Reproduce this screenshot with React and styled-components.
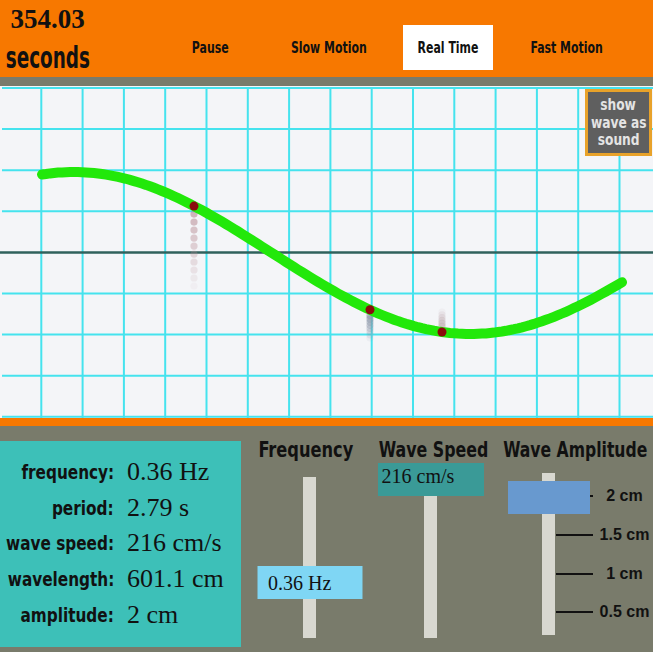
import React from 'react'
import styled, { createGlobalStyle } from 'styled-components'

const narrow = `"DejaVu Sans Condensed", "Liberation Sans", sans-serif`
const serif = `"Liberation Serif", "Times New Roman", serif`

const GlobalStyle = createGlobalStyle`
  html, body {
    margin: 0;
    padding: 0;
    background: #797b6b;
  }
  body {
    width: 653px;
    height: 652px;
    overflow: hidden;
    font-family: ${narrow};
    color: #111;
  }
`

// the original face is a tall, tight condensed gothic; squeeze DejaVu Condensed to match
const Squeeze = styled.span`
  display: inline-block;
  white-space: nowrap;
  transform: scaleX(${p => p.$x || 0.8});
  transform-origin: ${p => p.$origin || 'center'} center;
`

const Header = styled.header`
  display: flex;
  height: 77px;
  background: #f77800;
`

const Clock = styled.div`
  width: 95px;
  display: flex;
  flex-direction: column;
  align-items: center;
  padding-top: 1px;
`

const Time = styled.div`
  font-family: ${serif};
  font-weight: bold;
  font-size: 27px;
  line-height: 37px;
`

const Unit = styled.div`
  font-family: ${narrow};
  font-weight: bold;
  font-size: 31px;
  line-height: 38px;
`

const Nav = styled.nav`
  display: flex;
  align-items: center;
  align-self: flex-end;
  gap: 29px;
  margin: 0 0 7px 70px;
`

const NavButton = styled.button`
  display: flex;
  align-items: center;
  justify-content: center;
  width: 90px;
  height: 45px;
  padding: 0;
  border: none;
  background: ${p => (p.$active ? '#fff' : 'transparent')};
  font-family: ${narrow};
  font-weight: bold;
  font-size: 16px;
  color: #111;
  cursor: pointer;
`

const Divider = styled.div`
  height: 9px;
  background: #797b6b;
`

const Canvas = styled.div`
  position: relative;
  height: 332px;
  background: #f4f5f8;
  svg {
    display: block;
  }
`

const SoundButton = styled.button`
  position: absolute;
  top: 3px;
  right: 1px;
  width: 67px;
  height: 67px;
  box-sizing: border-box;
  border: 3px solid #e8a22a;
  background: #5f5f5f;
  color: #e4e4e4;
  font-family: ${narrow};
  font-weight: bold;
  font-size: 16px;
  line-height: 17.5px;
  padding: 0;
  display: flex;
  flex-direction: column;
  align-items: center;
  justify-content: center;
`

const OrangeBar = styled.div`
  height: 8px;
  background: #f77800;
`

const Controls = styled.section`
  display: flex;
  height: 226px;
`

const InfoPanel = styled.div`
  margin-top: 15px;
  width: 241px;
  height: 206px;
  box-sizing: border-box;
  padding-top: 13px;
  background: #3dc0b8;
  display: grid;
  grid-template-columns: 114px auto;
  grid-auto-rows: 35.7px;
  column-gap: 13px;
  align-items: center;
`

const InfoLabel = styled.div`
  display: flex;
  justify-content: flex-end;
  white-space: nowrap;
  font-family: ${narrow};
  font-weight: bold;
  font-size: 20px;
`

const InfoValue = styled.div`
  font-family: ${serif};
  font-size: 26px;
  white-space: nowrap;
`

const SliderColumn = styled.div`
  width: ${p => p.$width}px;
  display: flex;
  flex-direction: column;
`

const SliderTitle = styled.h2`
  margin: 12px 0 0;
  display: flex;
  justify-content: center;
  font-family: ${narrow};
  font-weight: bold;
  font-size: 22px;
  line-height: 24px;
`

const SliderBody = styled.div`
  display: flex;
  align-items: flex-start;
  padding-left: ${p => p.$inset}px;
  margin-top: ${p => p.$offset}px;
`

const Track = styled.div`
  position: relative;
  width: 13px;
  height: ${p => p.$height}px;
  background: #d8d8d0;
`

const Thumb = styled.div`
  position: absolute;
  z-index: 2;
  left: 50%;
  transform: translateX(-50%);
  width: ${p => p.$width}px;
  height: 33px;
  box-sizing: border-box;
  background: ${p => p.$color};
  font-family: ${serif};
  font-size: 20px;
  line-height: 22px;
  color: #111;
  padding: ${p => (p.$top ? '2px 0 0 4px' : '6px 0 0 11px')};
  white-space: nowrap;
`

const Scale = styled.div`
  display: flex;
  flex-direction: column;
  margin-top: 4px;
  margin-left: 1px;
`

const ScaleRow = styled.div`
  display: flex;
  align-items: center;
  height: 38.7px;
`

const Tick = styled.div`
  width: 37px;
  height: 2px;
  background: #111;
`

const TickLabel = styled.div`
  width: 57px;
  margin-left: 3px;
  text-align: center;
  white-space: nowrap;
  font-family: "Liberation Sans", Arial, sans-serif;
  font-weight: bold;
  font-size: 16px;
`

const info = [
  ['frequency:', '0.36 Hz'],
  ['period:', '2.79 s'],
  ['wave speed:', '216 cm/s'],
  ['wavelength:', '601.1 cm'],
  ['amplitude:', '2 cm'],
]

const speeds = ['Pause', 'Slow Motion', 'Real Time', 'Fast Motion']

const W = 653
const H = 332
const CX = 272
const LAMBDA = 793
const AMP = 81
const MID = 167

const waveY = x => MID + AMP * Math.sin((2 * Math.PI * (x - CX)) / LAMBDA)

function wavePath() {
  const pts = []
  for (let x = 42; x <= 622; x += 4) pts.push(`${x},${waveY(x).toFixed(1)}`)
  return 'M' + pts.join(' L')
}

function Trail({ x, from, to, n, color }) {
  const out = []
  for (let i = 0; i < n; i++) {
    const y = from + ((to - from) * i) / (n - 1)
    out.push(<circle key={i} cx={x} cy={y} r="3.6" fill={color} opacity={0.6 * (1 - i / n)} />)
  }
  return <g>{out}</g>
}

function WaveGrid() {
  const hLines = []
  for (let k = 0; k <= 8; k++) {
    const y = 2 + 41.1 * k
    if (k === 4) continue
    hLines.push(<line key={'h' + k} x1="2" x2={W} y1={y} y2={y} stroke="#45e3ee" strokeWidth="2" />)
  }
  const vLines = []
  for (let k = 1; k <= 15; k++) {
    const x = 41.3 * k
    vLines.push(<line key={'v' + k} x1={x} x2={x} y1="1" y2={H} stroke="#45e3ee" strokeWidth="2" />)
  }
  const dots = [194, 370, 442]
  return (
    <svg width={W} height={H} viewBox={`0 0 ${W} ${H}`}>
      {vLines}
      {hLines}
      <line x1="0" x2={W} y1="166.5" y2="166.5" stroke="#2f615c" strokeWidth="2.5" />
      <Trail x={194} from={waveY(194) + 8} to={200} n={10} color="#b78a92" />
      <Trail x={370} from={waveY(370) + 6} to={252} n={8} color="#8a96a8" />
      <Trail x={442} from={waveY(442) - 6} to={226} n={6} color="#c6b4b8" />
      <path d={wavePath()} fill="none" stroke="#22e80a" strokeWidth="10" strokeLinecap="round" />
      {dots.map(x => (
        <circle key={x} cx={x} cy={waveY(x)} r="4.5" fill="#8a0c0c" />
      ))}
    </svg>
  )
}

export default function App() {
  return (
    <>
      <GlobalStyle />
      <Header>
        <Clock>
          <Time>354.03</Time>
          <Unit><Squeeze $x={0.66}>seconds</Squeeze></Unit>
        </Clock>
        <Nav>
          {speeds.map(s => (
            <NavButton key={s} $active={s === 'Real Time'}>
              <Squeeze $x={0.76}>{s}</Squeeze>
            </NavButton>
          ))}
        </Nav>
      </Header>
      <Divider />
      <Canvas>
        <WaveGrid />
        <SoundButton>
          <Squeeze $x={0.85}>show</Squeeze>
          <Squeeze $x={0.85}>wave as</Squeeze>
          <Squeeze $x={0.85}>sound</Squeeze>
        </SoundButton>
      </Canvas>
      <OrangeBar />
      <Controls>
        <InfoPanel>
          {info.map(([label, value]) => (
            <React.Fragment key={label}>
              <InfoLabel><Squeeze $x={0.85} $origin="right">{label}</Squeeze></InfoLabel>
              <InfoValue>{value}</InfoValue>
            </React.Fragment>
          ))}
        </InfoPanel>

        <SliderColumn $width={129}>
          <SliderTitle><Squeeze $x={0.82}>Frequency</Squeeze></SliderTitle>
          <SliderBody $inset={62} $offset={15}>
            <Track $height={161}>
              <Thumb $width={105} $color="#7fd6f4" style={{ top: 89 }}>0.36 Hz</Thumb>
            </Track>
          </SliderBody>
        </SliderColumn>

        <SliderColumn $width={127}>
          <SliderTitle><Squeeze $x={0.8}>Wave Speed</Squeeze></SliderTitle>
          <SliderBody $inset={54} $offset={4}>
            <Track $height={172}>
              <Thumb $width={106} $color="#3a9a97" $top style={{ top: -3 }}>216 cm/s</Thumb>
            </Track>
          </SliderBody>
        </SliderColumn>

        <SliderColumn $width={156}>
          <SliderTitle><Squeeze $x={0.79}>Wave Amplitude</Squeeze></SliderTitle>
          <SliderBody $inset={45} $offset={11}>
            <Track $height={162}>
              <Thumb $width={82} $color="#6899cf" style={{ top: 8 }} />
            </Track>
            <Scale>
              {['2 cm', '1.5 cm', '1 cm', '0.5 cm'].map(t => (
                <ScaleRow key={t}>
                  <Tick />
                  <TickLabel>{t}</TickLabel>
                </ScaleRow>
              ))}
            </Scale>
          </SliderBody>
        </SliderColumn>
      </Controls>
    </>
  )
}
